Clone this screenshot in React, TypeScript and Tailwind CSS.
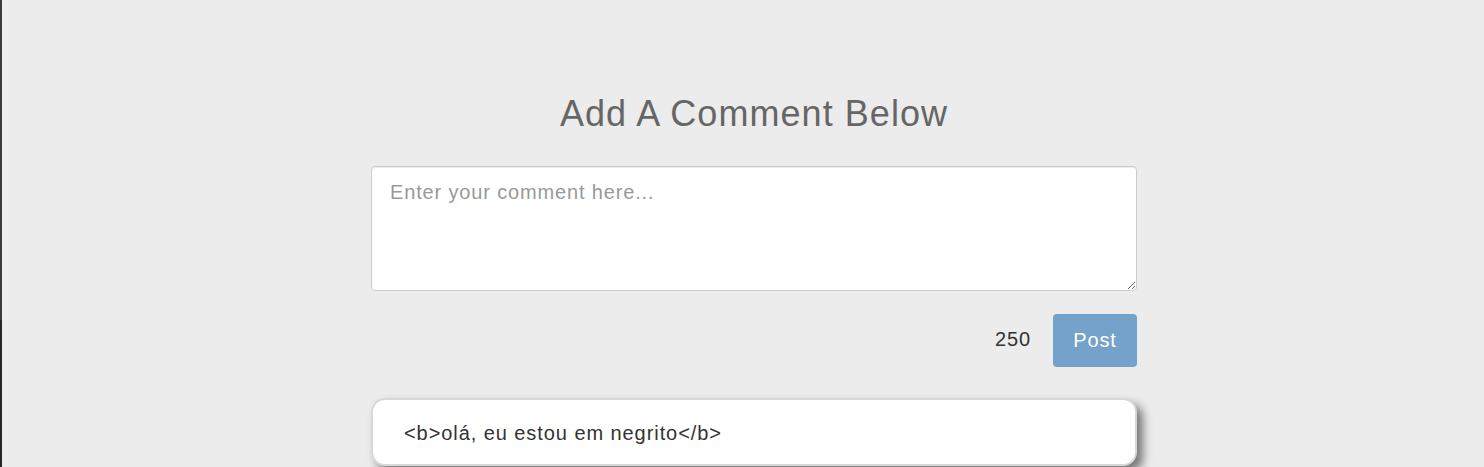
import React from "react";

export default function App() {
  return (
    <div
      className="flex h-[467px] w-full overflow-hidden bg-[#ececec] text-[#333]"
      style={{ fontFamily: '"Liberation Sans", Arial, sans-serif' }}>
      <div className="flex w-[2px] shrink-0 flex-col">
        <div className="h-[320px] bg-[#3a3a3a]" />
        <div className="flex-1 bg-[#262626]" />
      </div>
      <main className="ml-[369px] w-[766px] shrink-0 pt-[94px]">
        <h1 className="text-center text-[36px] leading-[1.1] font-normal tracking-[1.05px] text-[#666]">
          Add A Comment Below
        </h1>
        <textarea
          className="mt-[32px] block h-[125px] w-full resize-y rounded-[4px] border border-[#ccc] bg-white px-[18px] pt-[11px] text-[20px] leading-[1.43] tracking-[0.85px] text-[#555] shadow-[inset_0_1px_1px_rgba(0,0,0,0.075)] outline-none placeholder:text-[#999]"
          placeholder="Enter your comment here..."
        />
        <div className="mt-[23px] flex items-center justify-end gap-[22px]">
          <span className="-mt-[3px] text-[20px] leading-[28px] tracking-[0.9px] text-[#333]">250</span>
          <button
            disabled
            className="h-[53px] w-[84px] rounded-[4px] bg-[#74a2ca] text-[20px] tracking-[0.9px] text-white">
            Post
          </button>
        </div>
        <div className="mt-[31px] rounded-[14px] border-2 border-[#d8d8d8] bg-white px-[31px] pt-[19px] pb-[17px] shadow-[6px_6px_10px_#777]">
          <p className="text-[20px] leading-[28px] tracking-[0.93px] text-[#333]">
            &lt;b&gt;olá, eu estou em negrito&lt;/b&gt;
          </p>
        </div>
      </main>
    </div>
  );
}
